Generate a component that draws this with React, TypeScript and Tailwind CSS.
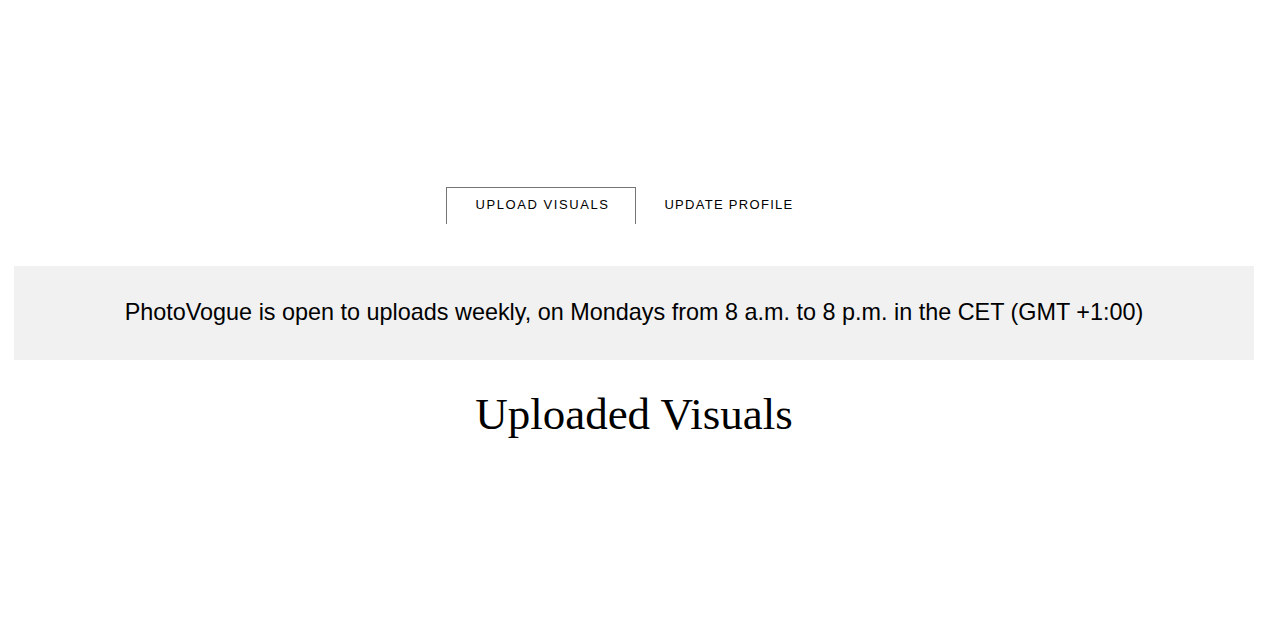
export default function App() {
  return (
    <div className="min-h-[640px] bg-white">
      <div className="w-[1268px] flex flex-col items-center pt-[187px]">
        <div className="flex items-start" style={{ fontFamily: '"Liberation Sans", Arial, sans-serif' }}>
          <button className="w-[190px] h-[37px] border border-b-0 border-[#757575] text-[13px] tracking-[0.12em] text-black pb-[2px] pl-[3px]">
            UPLOAD VISUALS
          </button>
          <button className="w-[186px] h-[37px] text-[13px] tracking-[0.1em] text-black pb-[2px]">
            UPDATE PROFILE
          </button>
        </div>

        <div className="mt-[42px] self-stretch mx-[14px] h-[94px] bg-[#f1f1f1] flex items-center justify-center">
          <p
            className="text-[23.4px] text-black"
            style={{ fontFamily: '"Liberation Sans", Arial, sans-serif' }}
          >
            PhotoVogue is open to uploads weekly, on Mondays from 8 a.m. to 8 p.m. in the CET (GMT +1:00)
          </p>
        </div>

        <h1
          className="mt-[26px] text-[45px] leading-[56px] text-black"
          style={{ fontFamily: '"Liberation Serif", "Times New Roman", serif' }}
        >
          Uploaded Visuals
        </h1>
      </div>
    </div>
  );
}
